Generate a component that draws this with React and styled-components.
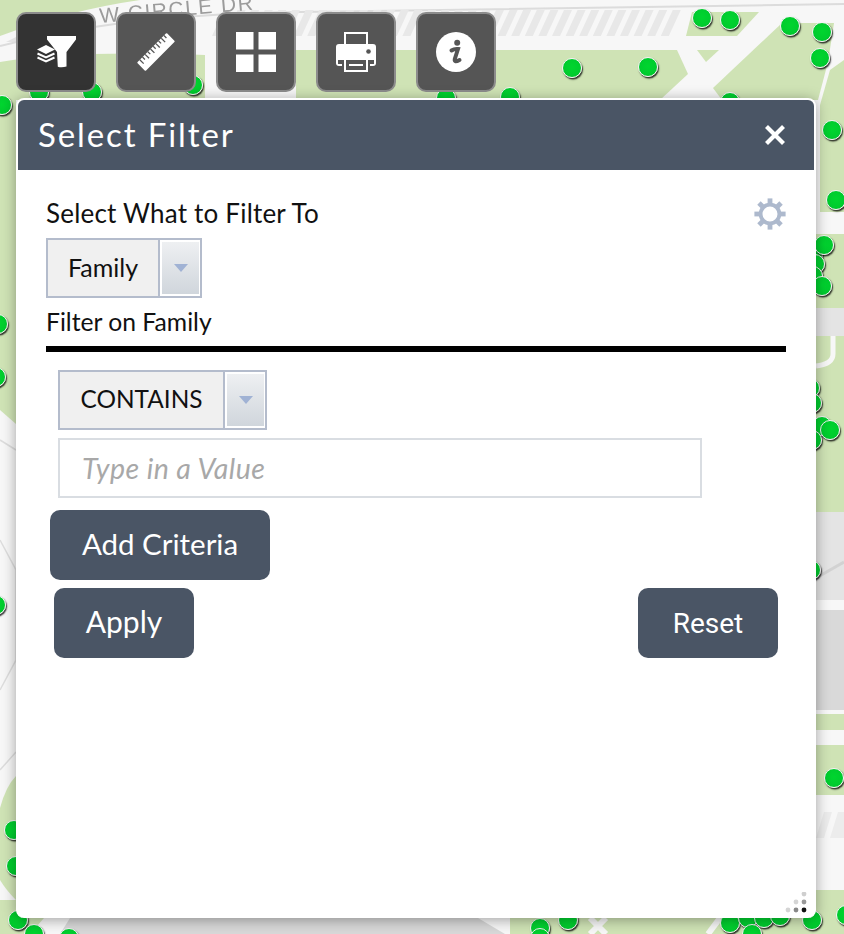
import React from "react";
import styled, { createGlobalStyle } from "styled-components";

const Global = createGlobalStyle`
  html, body { margin: 0; padding: 0; background: #f7f7f7; }
  * { box-sizing: border-box; }
`;

const Page = styled.div`
  position: relative;
  width: 844px;
  height: 934px;
  overflow: hidden;
  font-family: Lato, "Open Sans", sans-serif;
  color: #111;
`;

const MapArt = styled.svg`
  position: absolute;
  inset: 0;
  width: 844px;
  height: 934px;
  filter: blur(0.5px);
`;

const Pin = styled.span`
  position: absolute;
  width: 20px;
  height: 20px;
  margin: -10px 0 0 -10px;
  border-radius: 50%;
  border: 1.5px solid #f4f4f4;
  background: radial-gradient(circle at 50% 45%, #00d52f 0%, #00cc2e 60%, #00b42a 100%);
  box-shadow: 1px 1.5px 1.5px rgba(0, 0, 0, 0.8);
  left: ${(p) => p.$x}px;
  top: ${(p) => p.$y}px;
`;

const Foreground = styled.div`
  position: relative;
  z-index: 1;
`;

const Toolbar = styled.div`
  display: flex;
  gap: 20px;
  padding: 12px 16px 0;
`;

const ToolButton = styled.button`
  width: 80px;
  height: 80px;
  padding: 0;
  display: flex;
  align-items: center;
  justify-content: center;
  border: 2px solid #8c8c8c;
  border-radius: 10px;
  background: ${(p) => (p.$active ? "#333333" : "#555555")};
`;

const Panel = styled.section`
  position: relative;
  width: 800px;
  height: 820px;
  margin: 6px 0 0 16px;
  background: #fff;
  border: 2px solid #fff;
  border-bottom-width: 0;
  border-radius: 8px;
  box-shadow: 0 2px 14px rgba(0, 0, 0, 0.35);
`;

const PanelHeader = styled.header`
  height: 70px;
  display: flex;
  align-items: center;
  justify-content: space-between;
  padding: 0 28px 0 20px;
  background: #4a5565;
  border-radius: 6px 6px 0 0;
`;

const PanelTitle = styled.h1`
  margin: 0 0 2px;
  font-size: 33px;
  font-weight: 400;
  letter-spacing: 1.9px;
  color: #fff;
`;

const CloseButton = styled.button`
  display: flex;
  padding: 0;
  border: 0;
  background: none;
`;

const PanelBody = styled.div`
  padding: 28px 28px 0;
`;

const TitleRow = styled.div`
  display: flex;
  align-items: center;
  justify-content: space-between;
  height: 32px;
`;

const Label = styled.label`
  display: block;
  font-size: ${(p) => p.$size}px;
  line-height: ${(p) => p.$line}px;
  margin-top: ${(p) => p.$top || 0}px;
  letter-spacing: ${(p) => p.$spacing || 0}px;
`;

const HeadingLabel = styled(Label)`
  margin-bottom: 3px;
`;

const Select = styled.div`
  display: flex;
  width: ${(p) => p.$width}px;
  height: 60px;
  margin-top: 8px;
  margin-left: ${(p) => p.$indent || 0}px;
  background: #f0f0f0;
  border: 2px solid #b4bccc;
`;

const SelectValue = styled.span`
  flex: 1;
  display: flex;
  align-items: center;
  justify-content: center;
  padding-bottom: 3px;
  font-size: ${(p) => p.$size}px;
  border-right: 2px solid #b4bccc;
`;

const SelectArrow = styled.span`
  width: 40px;
  display: flex;
  align-items: center;
  justify-content: center;
  border: 2px solid #fff;
  border-right-width: 1px;
  border-bottom-width: 2px;
  background: linear-gradient(#eef0f2, #d0d6dc);

  &::after {
    content: "";
    border-style: solid;
    border-width: 8px 7.5px 0;
    border-color: #a0b2d4 transparent transparent;
  }
`;

const Rule = styled.hr`
  height: 6px;
  margin: 13px 0 18px;
  border: 0;
  background: #000;
`;

const ValueInput = styled.input`
  display: block;
  width: 644px;
  height: 60px;
  margin: 8px 0 0 12px;
  padding: 0 22px 1px;
  background: #fff;
  border: 2px solid #d9dde2;
  border-radius: 0;
  outline: 0;
  font-family: inherit;
  font-size: 28.5px;
  letter-spacing: 0.45px;

  &::placeholder {
    font-style: italic;
    color: #a8a8a8;
    opacity: 1;
  }
`;

const ActionButton = styled.button`
  width: ${(p) => p.$width}px;
  height: 70px;
  padding: 0 0 ${(p) => p.$lift || 0}px;
  border: 0;
  border-radius: 10px;
  background: #4a5565;
  color: #fff;
  font-family: ${(p) => p.$family || "inherit"};
  font-size: ${(p) => p.$size}px;
`;

const AddRow = styled.div`
  margin: 12px 0 0 4px;
`;

const ActionRow = styled.div`
  display: flex;
  justify-content: space-between;
  margin: 8px 8px 0;
`;

const Grip = styled.svg`
  position: absolute;
  right: 4px;
  bottom: 4px;
`;

const FilterIcon = () => (
  <svg width="48" height="48" viewBox="16 16 48 48">
    <path fill="#fff" d="M31 24H60V27.5L50.5 40V54.5Q46 56 41.8 54.8L41 40L31 27.5Z" />
    <path fill="#fff" d="M30 33L39 37.5L30 42L21 37.5Z" />
    <path fill="none" stroke="#fff" strokeWidth="2" d="M21.5 41.5L30 45.5L38.5 41.5" />
    <path fill="none" stroke="#fff" strokeWidth="2" d="M21.5 45.5L30 49.5L38.5 45.5" />
  </svg>
);

const ticks = Array.from({ length: 10 }, (_, i) => i);

const RulerIcon = () => (
  <svg width="48" height="48" viewBox="16 16 48 48">
    <g transform="rotate(-45 40 40)">
      <rect x="19" y="34" width="42" height="12" rx="1" fill="#fff" />
      {ticks.map((i) => (
        <rect key={i} x={22.4 + i * 3.8} y="34" width="1.3" height={i % 2 ? 3.5 : 5.5} fill="#555" />
      ))}
    </g>
  </svg>
);

const GridIcon = () => (
  <svg width="40" height="40" viewBox="0 0 40 40" fill="#fff">
    <rect x="0" y="0" width="17.5" height="17.5" />
    <rect x="22.5" y="0" width="17.5" height="17.5" />
    <rect x="0" y="22.5" width="17.5" height="17.5" />
    <rect x="22.5" y="22.5" width="17.5" height="17.5" />
  </svg>
);

const PrintIcon = () => (
  <svg width="40" height="40" viewBox="0 0 40 40">
    <rect x="9" y="1" width="22" height="13" fill="none" stroke="#fff" strokeWidth="2" />
    <path fill="#fff" d="M3 12H37Q40 12 40 15V31Q40 34 37 34H3Q0 34 0 31V15Q0 12 3 12Z" />
    <rect x="2" y="27" width="6" height="5" fill="#555" />
    <rect x="32" y="27" width="6" height="5" fill="#555" />
    <rect x="6" y="26" width="28" height="14" fill="#555" />
    <path fill="#fff" d="M2 26H8V28H2ZM32 26H38V28H32Z" />
    <rect x="9" y="27" width="22" height="12" fill="#555" stroke="#fff" strokeWidth="2" />
    <rect x="13" y="32" width="14" height="2" fill="#fff" />
    <circle cx="32.5" cy="19.5" r="2.3" fill="#555" />
  </svg>
);

const InfoIcon = () => (
  <svg width="40" height="40" viewBox="0 0 40 40">
    <circle cx="20" cy="20" r="20" fill="#fff" />
    <circle cx="21.2" cy="10.8" r="3" fill="#555" />
    <path
      fill="none"
      stroke="#555"
      strokeWidth="4"
      strokeLinecap="round"
      d="M15.5 18.5Q18.5 16.5 22 17L18.8 27Q18 31 23.5 28"
    />
  </svg>
);

const CloseIcon = () => (
  <svg width="22" height="22" viewBox="0 0 22 22">
    <path d="M2.5 2.5L19.5 19.5M19.5 2.5L2.5 19.5" stroke="#fff" strokeWidth="4.2" />
  </svg>
);

const teeth = [0, 45, 90, 135, 180, 225, 270, 315];

const GearIcon = () => (
  <svg width="32" height="32" viewBox="0 0 32 32">
    <circle cx="16" cy="16" r="9.4" fill="none" stroke="#adb9cd" strokeWidth="3.8" />
    {teeth.map((a) => (
      <rect key={a} x="13.6" y="0.4" width="4.8" height="6" fill="#adb9cd" transform={`rotate(${a} 16 16)`} />
    ))}
  </svg>
);

const gripDots = [
  [22, 2, "#cfcfcf"],
  [14, 10, "#d5d5d5"],
  [22, 10, "#999"],
  [6, 18, "#d5d5d5"],
  [14, 18, "#888"],
  [22, 18, "#111"],
];

const hatch = Array.from({ length: 34 }, (_, i) => i);

const MapBackground = () => (
  <MapArt viewBox="0 0 844 934">
    <rect width="844" height="934" fill="#f7f7f7" />
    <path fill="#cfe3b5" d="M0 0H140Q70 10 0 36Z" />
    <path fill="#cfe3b5" d="M0 62Q70 50 205 55L205 100H0Z" />
    <path fill="#e3e3e3" d="M6 42L22 34L22 42Z" />
    <path fill="none" stroke="#dcdcdc" strokeWidth="2" d="M0 46Q120 14 300 12T844 4" />
    <g fill="#e8e8e8">
      {hatch.map((i) => (
        <path key={i} d={`M${212 + i * 13.6} 36l12 -26h8l-12 26z`} />
      ))}
    </g>
    <path fill="#cfe3b5" d="M296 50H677L688 74L660 100H296Z" />
    <path fill="#cfe3b5" d="M697 50H719L706 62Z" />
    <path fill="#cfe3b5" d="M692 12H759L737 36H686Z" />
    <path fill="#cfe3b5" d="M782 23H834L828 62L818 100H722L713 88Z" />
    <path fill="#cfe3b5" d="M844 60V212H820V105L830 70Z" />
    <rect x="816" y="234" width="28" height="76" fill="#cfe3b5" />
    <rect x="816" y="308" width="28" height="28" fill="#e4e4e4" />
    <rect x="816" y="336" width="28" height="176" fill="#cfe3b5" />
    <path fill="none" stroke="#f7f7f7" strokeWidth="5" d="M833 336V354Q833 364 816 366" />
    <rect x="816" y="512" width="28" height="88" fill="#e4e4e4" />
    <path fill="none" stroke="#d2d2d2" strokeWidth="3" d="M816 578L844 562" />
    <rect x="816" y="610" width="28" height="100" fill="#d9d9d9" />
    <rect x="816" y="714" width="28" height="16" fill="#cfe3b5" />
    <rect x="816" y="745" width="28" height="50" fill="#cfe3b5" />
    <path fill="#ececec" d="M816 838L824 812H832L824 838ZM830 838L838 812H844V838Z" />
    <rect x="816" y="890" width="28" height="44" fill="#cfe3b5" />
    <path fill="#cfe3b5" d="M0 100H16V424L0 410Z" />
    <path fill="none" stroke="#ddd" strokeWidth="1.5" d="M0 540L16 570V660L0 690M0 440L16 450M0 770L16 752" />
    <path fill="#cfe3b5" d="M0 808Q6 786 16 776V900Q6 890 0 880Z" />
    <path fill="#cfe3b5" d="M0 900H16V918H44L30 934H0Z" />
    <path fill="#d8d8d8" d="M70 918H478L505 934H60Z" />
    <path fill="#cfe3b5" d="M510 918H844V934H510Z" />
    <path fill="none" stroke="#f7f7f7" strokeWidth="6" d="M590 918L606 934M606 918L590 934M720 918L708 934" />
    <text
      x="100"
      y="23"
      transform="rotate(-5 100 23)"
      fontFamily="Liberation Sans, sans-serif"
      fontSize="21"
      letterSpacing="1.5"
      fill="#9b9b9b"
    >
      W CIRCLE DR
    </text>
  </MapArt>
);

const pins = [
  [702, 18], [730, 20], [790, 26], [822, 32], [820, 58], [572, 68], [648, 67], [832, 130],
  [836, 200], [730, 102], [2, 105], [39, 92], [92, 92], [193, 85], [446, 98], [510, 97],
  [813, 254], [815, 264], [813, 276], [822, 286], [824, 245], [810, 388], [812, 403], [822, 426],
  [812, 440], [830, 430], [811, 570], [834, 778], [-2, 324], [-4, 377], [-4, 605], [14, 830],
  [16, 866], [18, 920], [34, 934], [69, 938], [540, 928], [568, 920], [540, 938], [730, 923],
  [748, 918], [764, 918], [780, 916], [752, 934], [812, 920], [846, 915],
];

export default function App() {
  return (
    <Page>
      <Global />
      <MapBackground />
      {pins.map(([x, y]) => (
        <Pin key={`${x}-${y}`} $x={x} $y={y} />
      ))}
      <Foreground>
        <Toolbar>
          <ToolButton $active aria-label="Filter"><FilterIcon /></ToolButton>
          <ToolButton aria-label="Measure"><RulerIcon /></ToolButton>
          <ToolButton aria-label="Basemaps"><GridIcon /></ToolButton>
          <ToolButton aria-label="Print"><PrintIcon /></ToolButton>
          <ToolButton aria-label="About"><InfoIcon /></ToolButton>
        </Toolbar>
        <Panel>
          <PanelHeader>
            <PanelTitle>Select Filter</PanelTitle>
            <CloseButton aria-label="Close"><CloseIcon /></CloseButton>
          </PanelHeader>
          <PanelBody>
            <TitleRow>
              <HeadingLabel $size={26} $line={32} $spacing={0.2}>Select What to Filter To</HeadingLabel>
              <GearIcon />
            </TitleRow>
            <Select $width={156}>
              <SelectValue $size={25}>Family</SelectValue>
              <SelectArrow />
            </Select>
            <Label $size={24.7} $line={23} $top={12}>Filter on Family</Label>
            <Rule />
            <Select $width={209} $indent={12}>
              <SelectValue $size={24.4}>CONTAINS</SelectValue>
              <SelectArrow />
            </Select>
            <ValueInput placeholder="Type in a Value" />
            <AddRow>
              <ActionButton $width={220} $size={29.5} $lift={4}>Add Criteria</ActionButton>
            </AddRow>
            <ActionRow>
              <ActionButton $width={140} $size={30} $lift={4}>Apply</ActionButton>
              <ActionButton $width={140} $size={28} $family="Roboto, sans-serif">Reset</ActionButton>
            </ActionRow>
          </PanelBody>
          <Grip width="28" height="22" viewBox="0 0 28 22">
            {gripDots.map(([x, y, c]) => (
              <circle key={`${x}${y}`} cx={x} cy={y} r="2.4" fill={c} />
            ))}
          </Grip>
        </Panel>
      </Foreground>
    </Page>
  );
}
